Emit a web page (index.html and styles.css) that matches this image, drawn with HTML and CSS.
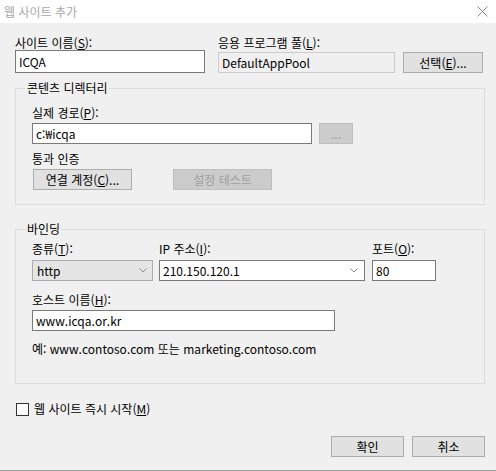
FILE: index.html
```html
<!DOCTYPE html>
<html lang="ko">
<head>
<meta charset="utf-8">
<title>웹 사이트 추가</title>
<link rel="stylesheet" href="styles.css">
</head>
<body>
<div class="dialog">
  <div class="titlebar">
    <span class="title">웹 사이트 추가</span>
    <svg class="close" width="11" height="11" viewBox="0 0 11 11"><path d="M0.5 0.5 L10.5 10.5 M10.5 0.5 L0.5 10.5" stroke="#8a8a8a" stroke-width="1" fill="none"/></svg>
  </div>
  <div class="content">
    <div class="row1">
      <div class="col-site">
        <div class="label">사이트 이름(<u>S</u>):</div>
        <div class="input tall">ICQA</div>
      </div>
      <div class="col-pool">
        <div class="label">응용 프로그램 풀(<u>L</u>):</div>
        <div class="input readonly">DefaultAppPool</div>
      </div>
      <div class="btn btn-select">선택(<u>E</u>)...</div>
    </div>

    <fieldset class="group group-content">
      <legend>콘텐츠 디렉터리</legend>
      <div class="label">실제 경로(<u>P</u>):</div>
      <div class="path-row">
        <div class="input path">c:₩icqa</div>
        <div class="btn disabled browse">...</div>
      </div>
      <div class="label auth-label">통과 인증</div>
      <div class="auth-row">
        <div class="btn wide">연결 계정(<u>C</u>)...</div>
        <div class="btn disabled wide">설정 테스트</div>
      </div>
    </fieldset>

    <fieldset class="group group-binding">
      <legend>바인딩</legend>
      <div class="binding-row">
        <div class="col-type">
          <div class="label">종류(<u>T</u>):</div>
          <div class="combo list">http<svg class="chev" width="8" height="5" viewBox="0 0 8 5"><path d="M0.5 0.5 L4 4 L7.5 0.5" stroke="#8a8a8a" fill="none"/></svg></div>
        </div>
        <div class="col-ip">
          <div class="label">IP 주소(<u>I</u>):</div>
          <div class="combo">210.150.120.1<svg class="chev" width="8" height="5" viewBox="0 0 8 5"><path d="M0.5 0.5 L4 4 L7.5 0.5" stroke="#8a8a8a" fill="none"/></svg></div>
        </div>
        <div class="col-port">
          <div class="label">포트(<u>O</u>):</div>
          <div class="input port">80</div>
        </div>
      </div>
      <div class="label host-label">호스트 이름(<u>H</u>):</div>
      <div class="input host">www.icqa.or.kr</div>
      <div class="label example">예: www.contoso.com 또는 marketing.contoso.com</div>
    </fieldset>

    <div class="check-row">
      <span class="checkbox"></span>
      <span class="label">웹 사이트 즉시 시작(<u>M</u>)</span>
    </div>

    <div class="footer">
      <div class="btn ok">확인</div>
      <div class="btn ok">취소</div>
    </div>
  </div>
</div>
</body>
</html>
```

FILE: styles.css
```css
* { box-sizing: border-box; }
html, body { margin: 0; padding: 0; }
body {
  background: #f0f0f0;
  font-family: "Noto Sans CJK KR", "Noto Sans", sans-serif;
  font-size: 12px;
  color: #000;
}
.dialog {
  width: 496px;
  height: 471px;
  background: #f0f0f0;
  border-bottom: 1px solid #a0a0a0;
  overflow: hidden;
}
.titlebar {
  height: 23px;
  background: #fff;
  display: flex;
  align-items: center;
  justify-content: space-between;
  padding: 0 8px 0 4px;
}
.title { color: #a8a8a8; line-height: 23px; }
.close { display: block; }

.content { padding: 0 11px 0 15px; }
.label { line-height: 14px; white-space: nowrap; }
u { text-decoration: underline; text-underline-offset: 1px; }

.input {
  background: #fff;
  border: 1px solid #7a7a7a;
  height: 21px;
  line-height: 19px;
  padding: 0 3px;
  white-space: nowrap;
}
.input.tall { height: 23px; line-height: 21px; }
.input.readonly { background: #f0f0f0; border-color: #cccccc; }

.btn {
  background: #e1e1e1;
  border: 1px solid #adadad;
  height: 21px;
  line-height: 19px;
  text-align: center;
  white-space: nowrap;
}
.btn.disabled { background: #cccccc; border-color: #bfbfbf; color: #a0a0a0; }

.row1 {
  display: flex;
  align-items: flex-end;
  margin-top: 13px;
}
.col-site { width: 190px; }
.col-pool { width: 177px; margin-left: 13px; }
.col-pool .label { margin-bottom: 2px; }
.btn-select { width: 80px; margin-left: 8px; }

.group {
  margin: 0;
  width: 470px;
  border: 1px solid #dcdcdc;
  padding: 0 16px;
  min-width: 0;
}
.group legend {
  padding: 0 1px;
  margin-left: -6px;
  line-height: 14px;
}
.group-content { margin-top: 8px; padding-top: 11px; padding-bottom: 14px; }
.path-row { display: flex; gap: 7px; margin-top: 3px; }
.input.path { width: 280px; }
.browse { width: 34px; }
.auth-label { margin-top: 8px; }
.auth-row { display: flex; gap: 41px; margin-top: 3px; padding-left: 1px; }
.btn.wide { width: 99px; }

.group-binding { margin-top: 17px; padding-top: 6px; padding-bottom: 27px; }
.binding-row { display: flex; }
.binding-row .label { margin-bottom: 4px; }
.col-type { width: 121px; }
.col-ip { width: 206px; margin-left: 6px; }
.col-port { width: 64px; margin-left: 7px; }
.combo {
  height: 21px;
  line-height: 19px;
  padding: 0 6px 0 3px;
  background: #fff;
  border: 1px solid #7a7a7a;
  display: flex;
  align-items: center;
  justify-content: space-between;
}
.combo.list { background: #e5e5e5; border-color: #adadad; padding-left: 4px; padding-right: 5px; }
.chev { display: block; }
.host-label { margin-top: 12px; }
.input.host { width: 303px; margin-top: 3px; }
.example { margin-top: 11px; }

.check-row {
  display: flex;
  align-items: center;
  margin-top: 18px;
  padding-left: 1px;
  height: 14px;
}
.checkbox {
  width: 13px;
  height: 13px;
  border: 1px solid #333;
  background: #fff;
  margin-right: 5px;
}
.footer {
  display: flex;
  justify-content: flex-end;
  gap: 8px;
  margin-top: 20px;
}
.btn.ok { width: 73px; }
```
